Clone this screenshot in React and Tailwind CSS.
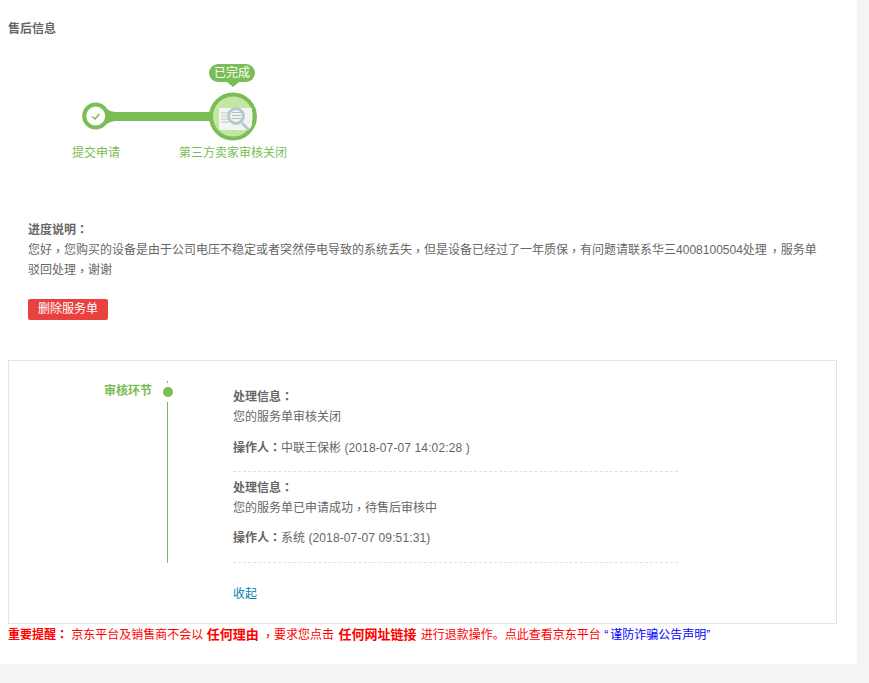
const Colon = () => <span className="leading-none font-['Noto_Sans_CJK_JP',sans-serif]">：</span>;
const Comma = () => <span className="leading-none align-[-2px] font-['Noto_Sans_CJK_TC',sans-serif]">，</span>;
function Head({ children }) {
  return <div className="font-bold text-[12px] leading-[20px] text-[#666]">{children}<Colon /></div>;
}
function Entry({ msg, who, time, top, gap, mb }) {
  return (
    <div className={`${top} w-[445px] border-b border-dashed border-[#e0e0e0]`}>
      <Head>处理信息</Head>
      <div className="text-[12px] leading-[20px] text-[#666]">{msg}</div>
      <div className={`text-[12px] leading-[20px] text-[#666] ${gap} ${mb}`}>
        <span className="font-bold">操作人<Colon /></span>{who} <span className="tracking-[0.12px]">({time})</span>
      </div>
    </div>
  );
}
export default function App() {
  return (
    <div className="h-[683px] bg-[#f4f4f4] overflow-hidden font-['Liberation_Sans','Noto_Sans_CJK_SC',sans-serif]">
      <div className="w-[857px] h-[664px] bg-white flex flex-col pl-[8px]">
        <div className="mt-[19px] text-[12px] leading-[20px] font-bold text-[#666]">售后信息</div>

        <div className="relative mt-[25px] h-[116px] w-[300px] shrink-0">
          <div className="absolute left-[201px] top-0 w-[46px] h-[18px] rounded-[9px] bg-[#7abd54] text-white text-[12px] leading-[18px] text-center">已完成</div>
          <div className="absolute left-[219px] top-[18px] w-0 h-0 border-x-[6px] border-x-transparent border-t-[5px] border-t-[#7abd54]"></div>
          <svg className="absolute left-[70px] top-[26px]" width="184" height="56" viewBox="0 0 184 56">
            <defs>
              <clipPath id="inner"><circle cx="155" cy="26.5" r="21" /></clipPath>
            </defs>
            <path d="M27 18 Q33 22 38 22 L130 22 Q136 22 140 17 L140 36 Q136 31 130 31 L38 31 Q33 31 27 35 Z" fill="#7abd54" />
            <circle cx="17.7" cy="26" r="11.5" fill="#fff" stroke="#7abd54" strokeWidth="4" />
            <path d="M14 26.5 L17 29 L21.5 24" fill="none" stroke="#7abd54" strokeWidth="1.6" />
            <circle cx="155" cy="26.5" r="22" fill="#c3e5a6" stroke="#7abd54" strokeWidth="4" />
            <g clipPath="url(#inner)">
              <rect x="141" y="18" width="33" height="22" fill="#f2f5f0" />
              <path d="M143 23h12M143 26h12M143 29h12M143 32h8" stroke="#c4c9c4" strokeWidth="1" />
              <circle cx="158" cy="26" r="7.5" fill="#eef2f0" stroke="#b4c9d0" strokeWidth="3" />
              <path d="M154 22.5h9M154 25.5h9M154 28.5h9" stroke="#b9bfbb" strokeWidth="1.2" />
              <path d="M164 33l7 7" stroke="#b4c9d0" strokeWidth="3" />
            </g>
          </svg>
          <div className="absolute left-[64px] top-[81px] text-[12px] leading-[16px] text-[#7abd54]">提交申请</div>
          <div className="absolute left-[171px] top-[81px] text-[12px] leading-[16px] text-[#7abd54] whitespace-nowrap">第三方卖家审核关闭</div>
        </div>

        <div className="mt-[40px] pl-[20px] text-[12px] leading-[20px] text-[#666] whitespace-nowrap">
          <div className="font-bold">进度说明<Colon /></div>
          <div>您好<Comma />您购买的设备是由于公司电压不稳定或者突然停电导致的系统丢失<Comma />但是设备已经过了一年质保<Comma />有问题请联系华三4008100504处理<span className="ml-[2px]"><Comma />服务单</span></div>
          <div>驳回处理<Comma />谢谢</div>
        </div>
        <button className="ml-[20px] mt-[19px] w-[80px] h-[21px] rounded-[2px] bg-[#e94040] text-white text-[12px] leading-[21px] text-center">删除服务单</button>

        <div className="mt-[40px] w-[829px] h-[264px] border border-[#e4e4e4] flex">
          <div className="w-[158px] shrink-0 relative">
            <div className="absolute right-[-1px] top-[20px] h-[2px] w-[1px] bg-[#7abd54]"></div>
            <div className="mt-[20px] flex justify-end items-center gap-[11px]">
              <span className="text-[12px] leading-[20px] font-bold text-[#7abd54]">审核环节</span>
              <span className="w-[10px] h-[10px] rounded-full bg-[#7abd54] mr-[-6px] mt-[2px]"></span>
            </div>
            <div className="absolute right-[-1px] top-[41px] h-[161px] w-[1px] bg-[#7ab85a]"></div>
          </div>
          <div className="ml-[66px] pt-[26px] flex flex-col">
            <Entry top="" gap="mt-[11px]" mb="mb-[13px]" msg="您的服务单审核关闭" who="中联王保彬" time="2018-07-07 14:02:28 " />
            <Entry top="mt-[6px]" gap="mt-[10px]" mb="mb-[14px]" msg={<>您的服务单已申请成功<Comma />待售后审核中</>} who="系统" time="2018-07-07 09:51:31" />
            <a className="mt-[21px] text-[12px] leading-[20px] text-[#0a7fb5]">收起</a>
          </div>
        </div>

        <div className="text-[12px] leading-[20px] text-[#f00] whitespace-nowrap mt-[1px]">
          <span className="font-bold">重要提醒<Colon /></span> 京东平台及销售商不会以 <span className="font-bold text-[13px]">任何理由</span> <Comma />要求您点击 <span className="ml-[1px] font-bold text-[13px]">任何网址链接</span> <span className="ml-[1px]">进行退款操作。点此查看京东平台</span> <span className="text-[#00f]"><span className="mr-[2px]">“</span>谨防诈骗公告声明”</span>
        </div>
      </div>
    </div>
  );
}
